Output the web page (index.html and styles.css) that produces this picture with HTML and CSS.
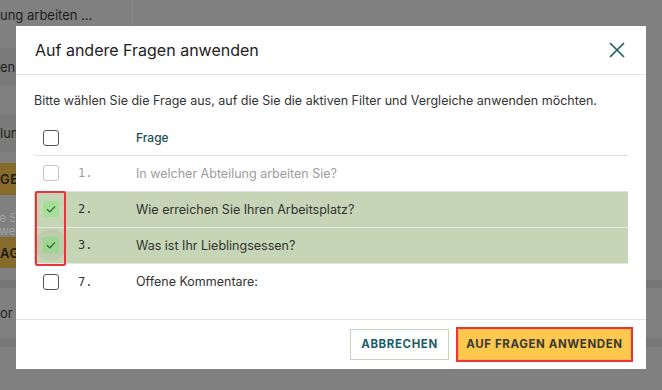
FILE: index.html
```html
<!DOCTYPE html>
<html lang="de">
<head>
  <meta charset="UTF-8" />
  <title>Auf andere Fragen anwenden</title>
  <link rel="stylesheet" href="styles.css">
</head>
<body>
  <div class="page">
    <!-- page behind the dialog, dimmed -->
    <div class="backdrop">
      <div class="bg-top"><span class="bg-title">ung arbeiten ...</span></div>
      <div class="bg-row h38"><span class="bg-cell band">en</span></div>
      <div class="bg-row h28"></div>
      <div class="bg-row h38"><span class="bg-cell band">lum</span></div>
      <div class="bg-row h11"></div>
      <div class="bg-row h32"><span class="bg-cell gold">GE</span></div>
      <div class="bg-row h42"><span class="bg-cell note">e Se<br>we</span></div>
      <div class="bg-row h31"><span class="bg-cell gold">AG</span></div>
      <div class="bg-row h12"></div>
      <div class="bg-row h8 full"></div>
      <div class="bg-row h50"><span class="bg-cell">or</span></div>
      <div class="bg-row h9 full"></div>
    </div>

    <div class="modal">
      <header class="modal-head">
        <h2 class="modal-title">Auf andere Fragen anwenden</h2>
        <button class="close-btn" aria-label="Schließen">
          <svg width="16" height="16" viewBox="0 0 16 16"><path d="M1 1 L15 15 M15 1 L1 15" stroke="#1f6060" stroke-width="1.7" fill="none"/></svg>
        </button>
      </header>

      <div class="modal-body">
        <p class="intro">Bitte wählen Sie die Frage aus, auf die Sie die aktiven Filter und Vergleiche anwenden möchten.</p>

        <div class="qtable">
          <div class="qrow head">
            <span class="cb"></span>
            <span></span>
            <span class="col-title">Frage</span>
          </div>
          <div class="qrow disabled">
            <span class="cb"></span>
            <span class="num">1.</span>
            <span>In welcher Abteilung arbeiten Sie?</span>
          </div>
          <div class="qrow selected">
            <span class="cb checked">
              <svg width="16" height="16" viewBox="0 0 16 16"><path d="M4 8.3 L6.9 11 L12 5.4" stroke="#3c5c3c" stroke-width="1.2" fill="none"/></svg>
            </span>
            <span class="num">2.</span>
            <span>Wie erreichen Sie Ihren Arbeitsplatz?</span>
          </div>
          <div class="qrow selected">
            <span class="cb checked focus">
              <svg width="16" height="16" viewBox="0 0 16 16"><path d="M4 8.3 L6.9 11 L12 5.4" stroke="#3c5c3c" stroke-width="1.2" fill="none"/></svg>
            </span>
            <span class="num">3.</span>
            <span>Was ist Ihr Lieblingsessen?</span>
          </div>
          <div class="qrow last">
            <span class="cb"></span>
            <span class="num">7.</span>
            <span>Offene Kommentare:</span>
          </div>
          <div class="mark"></div>
        </div>
      </div>

      <footer class="modal-foot">
        <button class="btn btn-secondary">ABBRECHEN</button>
        <button class="btn btn-primary">AUF FRAGEN ANWENDEN</button>
      </footer>
    </div>
  </div>
</body>
</html>
```

FILE: styles.css
```css
body {
  margin: 0;
  font-family: Inter, "Noto Sans", sans-serif;
}
.page {
  position: relative;
  width: 662px;
  height: 390px;
  background-color: #808080;
  overflow: hidden;
}

/* dimmed page behind */
.bg-top {
  height: 48px;
}
.bg-title {
  display: inline-block;
  width: 133px;
  height: 34px;
  padding-top: 7px;
  box-sizing: border-box;
  border-right: 1px solid #8b8b8b;
  font-size: 13px;
  color: #1e1e1e;
}
.bg-row {
  display: flex;
}
.bg-row.full {
  background-color: #777777;
}
.h8 { height: 8px; }
.h9 { height: 9px; }
.h11 { height: 11px; }
.h12 { height: 12px; }
.h28 { height: 28px; }
.h31 { height: 31px; }
.h32 { height: 32px; }
.h38 { height: 38px; }
.h42 { height: 42px; }
.h50 { height: 50px; }
.bg-cell {
  width: 16px;
  overflow: hidden;
  display: flex;
  align-items: center;
  white-space: nowrap;
  font-size: 13px;
  color: #1e1e1e;
}
.bg-cell.band {
  background-color: #7a7a7a;
}
.bg-cell.gold {
  background-color: #866b2b;
  font-weight: 600;
  letter-spacing: 0.5px;
  color: #1c1a14;
}
.bg-cell.note {
  display: block;
  padding-top: 16px;
  font-size: 12px;
  line-height: 13px;
  color: #a2a2a2;
  margin-left: -1px;
}

/* dialog */
.modal {
  position: absolute;
  left: 16px;
  top: 26px;
  width: 630px;
  height: 343px;
  background-color: #ffffff;
  display: flex;
  flex-direction: column;
}
.modal-head {
  height: 49px;
  box-sizing: border-box;
  display: flex;
  align-items: center;
  justify-content: space-between;
  padding: 0 21px 0 19px;
  border-bottom: 1px solid #e2e2e2;
}
.modal-title {
  margin: 0;
  font-size: 16px;
  font-weight: 400;
  color: #222222;
}
.close-btn {
  background: none;
  border: none;
  padding: 0;
  width: 16px;
  height: 16px;
  cursor: pointer;
}
.modal-body {
  padding: 17px 18px 19px;
}
.intro {
  margin: 0 0 11px;
  font-size: 12.5px;
  line-height: 18px;
  color: #333333;
}
.qtable {
  position: relative;
}
.qrow {
  display: grid;
  grid-template-columns: 44px 58px 1fr;
  align-items: center;
  height: 36px;
  box-sizing: border-box;
  border-bottom: 1px solid #e0e0e0;
  font-size: 12.5px;
  color: #333333;
}
.qrow.head {
  height: 35px;
}
.qrow.last {
  border-bottom: none;
}
.qrow.selected {
  background-color: #c5d5b5;
  border-bottom-color: #e2e9dc;
}
.qrow.disabled {
  color: #9c9c9c;
}
.col-title {
  font-size: 12px;
  font-weight: 500;
  color: #24504c;
}
.num {
  font-family: "DejaVu Sans Mono", monospace;
  font-size: 12px;
}
.cb {
  position: relative;
  width: 16px;
  height: 16px;
  box-sizing: border-box;
  margin-left: 9px;
  border: 1.5px solid #555555;
  border-radius: 3px;
}
.qrow.disabled .cb {
  border-color: #c6c6c6;
}
.cb.checked {
  border: none;
  background-color: #a3df95;
}
.cb svg {
  display: block;
}
.cb.focus::before {
  content: "";
  position: absolute;
  left: -8px;
  top: -8px;
  width: 32px;
  height: 32px;
  border-radius: 50%;
  background-color: rgba(0, 0, 0, 0.04);
}
.mark {
  position: absolute;
  left: 1px;
  top: 70px;
  width: 31px;
  height: 75px;
  box-sizing: border-box;
  border: 2px solid #ea3340;
  border-radius: 2px;
}
.modal-foot {
  margin-top: auto;
  height: 51px;
  box-sizing: border-box;
  display: flex;
  justify-content: flex-end;
  align-items: center;
  gap: 9px;
  padding-right: 15px;
  border-top: 1px solid #e2e2e2;
}
.btn {
  height: 31px;
  padding: 0;
  font-family: Inter, "Noto Sans", sans-serif;
  font-size: 11.5px;
  font-weight: 700;
  letter-spacing: 0.6px;
  cursor: pointer;
}
.btn-secondary {
  width: 99px;
  background-color: #ffffff;
  border: 1px solid #c3d6bd;
  color: #1d5e6a;
}
.btn-primary {
  width: 173px;
  background-color: #fdc84e;
  border: 1px solid #f6bd42;
  color: #3a3a30;
  box-shadow: 0 0 0 2px #ec3340;
}
```
